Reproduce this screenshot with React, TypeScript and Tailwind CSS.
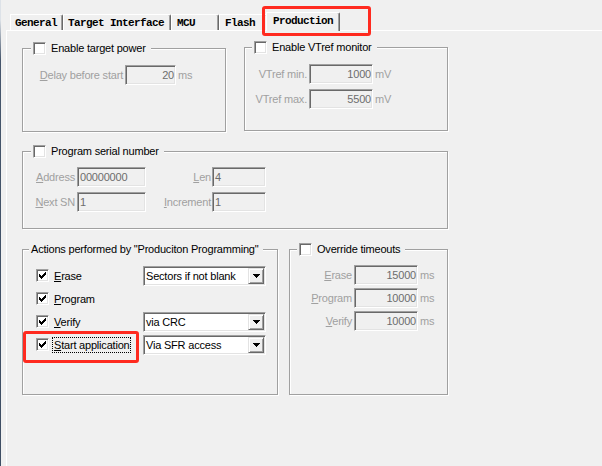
import React from "react";

const FONT = "font-['Liberation_Sans',Arial,sans-serif]";
const sunken =
  "border border-t-[#a0a0a0] border-l-[#a0a0a0] border-b-white border-r-white shadow-[inset_1px_1px_0_#696969,inset_-1px_-1px_0_#e3e3e3]";
const DIS = "text-[#a0a0a0]";

function CheckMark() {
  const px: [number, number, number][] = [
    [6, 0, 1],
    [5, 1, 2],
    [0, 2, 1],
    [4, 2, 3],
    [0, 3, 2],
    [3, 3, 3],
    [0, 4, 5],
    [1, 5, 3],
    [2, 6, 1],
  ];
  return (
    <svg width="7" height="7" viewBox="0 0 7 7" shapeRendering="crispEdges">
      {px.map(([x, y, w], i) => (
        <rect key={i} x={x} y={y} width={w} height={1} fill="#000" />
      ))}
    </svg>
  );
}

function Checkbox({ checked }: { checked?: boolean }) {
  return (
    <span className={`w-[13px] h-[13px] shrink-0 bg-white ${sunken} flex items-center justify-center`}>
      {checked && <CheckMark />}
    </span>
  );
}

function Arrow() {
  return (
    <svg width="7" height="4" viewBox="0 0 7 4" shapeRendering="crispEdges">
      <rect x="0" y="0" width="7" height="1" fill="#000" />
      <rect x="1" y="1" width="5" height="1" fill="#000" />
      <rect x="2" y="2" width="3" height="1" fill="#000" />
      <rect x="3" y="3" width="1" height="1" fill="#000" />
    </svg>
  );
}

function Dropdown({ text }: { text: string }) {
  return (
    <div className={`w-[123px] h-[20px] shrink-0 bg-white ${sunken} flex items-center`}>
      <span className="flex-1 pl-[2px] whitespace-nowrap overflow-hidden">{text}</span>
      <span className="mr-[1px] w-[16px] h-[16px] bg-[#f0f0f0] border border-t-[#e3e3e3] border-l-[#e3e3e3] border-b-[#696969] border-r-[#696969] shadow-[inset_1px_1px_0_#fff,inset_-1px_-1px_0_#a0a0a0] flex items-center justify-center">
        <Arrow />
      </span>
    </div>
  );
}

function Field({ cls, children }: { cls: string; children: React.ReactNode }) {
  return (
    <div className={`h-[20px] shrink-0 bg-[#f0f0f0] ${sunken} flex items-center text-[#6d6d6d] ${cls}`}>
      {children}
    </div>
  );
}

function U({ children }: { children: React.ReactNode }) {
  return <span className="underline underline-offset-[1px] decoration-1">{children}</span>;
}

function Group({
  cls,
  titleMl,
  title,
  children,
}: {
  cls: string;
  titleMl: string;
  title: React.ReactNode;
  children?: React.ReactNode;
}) {
  return (
    <div className={`shrink-0 border border-[#a0a0a0] shadow-[inset_1px_1px_0_#fff,1px_1px_0_#fff] flex flex-col ${cls}`}>
      <div className={`-mt-[8px] h-[14px] w-fit flex items-center bg-[#f0f0f0] pl-[2px] pr-[5px] whitespace-nowrap ${titleMl}`}>
        {title}
      </div>
      {children}
    </div>
  );
}

function Tab({
  w,
  pl,
  selected,
  children,
}: {
  w: string;
  pl: string;
  selected?: boolean;
  children: React.ReactNode;
}) {
  return (
    <div
      className={`${w} ${pl} ${
        selected ? "relative z-10 -mb-[1px] -ml-[2px] h-[19px]" : "h-[16px]"
      } shrink-0 bg-[#f0f0f0] border-l border-t border-white border-r border-r-[#696969] shadow-[inset_-1px_0_0_#a0a0a0] rounded-tr-[2px] pt-[2px] leading-[12px] whitespace-nowrap`}
    >
      {children}
    </div>
  );
}

function ActionRow({
  label,
  dropdown,
  focus,
}: {
  label: React.ReactNode;
  dropdown?: string;
  focus?: boolean;
}) {
  return (
    <div className="h-[23px] flex items-center">
      <div className="w-[120px] shrink-0 flex items-center pl-[13px]">
        <Checkbox checked />
        <span
          className={`ml-[3px] px-[1px] border leading-[14px] whitespace-nowrap ${
            focus ? "border-dotted border-black" : "border-transparent"
          }`}
        >
          {label}
        </span>
      </div>
      {dropdown && <Dropdown text={dropdown} />}
    </div>
  );
}

function TimeoutRow({ label, value }: { label: React.ReactNode; value: string }) {
  return (
    <div className="h-[20px] flex items-center">
      <span className={`w-[62px] text-right whitespace-nowrap ${DIS}`}>{label}</span>
      <Field cls="ml-[2px] w-[64px] justify-end pr-[1px]">{value}</Field>
      <span className={`ml-[2px] ${DIS}`}>ms</span>
    </div>
  );
}

export default function App() {
  return (
    <div
      className={`relative w-[602px] h-[466px] overflow-hidden bg-[#f0f0f0] flex ${FONT} text-[11px] leading-[14px] tracking-[-0.2px] text-black`}
    >
      <div className="w-[1px] shrink-0 bg-[linear-gradient(to_bottom,#dde2e8_0px,#dde2e8_20px,#46566c_60px,#3e4e64_100%)]" />
      <div className="flex-1 flex flex-col">
        <div className="h-[30px] shrink-0 flex items-end pl-[9px] font-['Liberation_Mono',monospace] font-bold text-[11px] tracking-[-0.6px]">
          <Tab w="w-[53px]" pl="pl-[4px]">General</Tab>
          <Tab w="w-[108px]" pl="pl-[4px]">Target Interface</Tab>
          <Tab w="w-[48px]" pl="pl-[5px]">MCU</Tab>
          <Tab w="w-[49px]" pl="pl-[5px]">Flash</Tab>
          <Tab w="w-[74px]" pl="pl-[6px]" selected>
            Production
          </Tab>
        </div>

        <div className="ml-[5px] flex-1 border-l border-t border-white flex flex-col">
          {/* Row 1 */}
          <div className="mt-[17px] ml-[15px] flex items-start">
            <Group
              cls="w-[204px] h-[84px]"
              titleMl="ml-[8px]"
              title={
                <>
                  <Checkbox />
                  <span className="ml-[5px]">Enable target power</span>
                </>
              }
            >
              <div className="mt-[10px] flex items-center h-[20px]">
                <span className={`w-[100px] text-right whitespace-nowrap ${DIS}`}>
                  <U>D</U>elay before start
                </span>
                <Field cls="ml-[2px] w-[51px] justify-end pr-[1px]">20</Field>
                <span className={`ml-[2px] ${DIS}`}>ms</span>
              </div>
            </Group>

            <Group
              cls="ml-[18px] -mt-[1px] w-[204px] h-[84px]"
              titleMl="ml-[7px]"
              title={
                <>
                  <Checkbox />
                  <span className="ml-[5px]">Enable VTref monitor</span>
                </>
              }
            >
              <div className="mt-[10px] flex flex-col gap-[5px]">
                <div className="flex items-center h-[20px]">
                  <span className={`w-[62px] text-right whitespace-nowrap ${DIS}`}>VTref min.</span>
                  <Field cls="ml-[2px] w-[64px] justify-end pr-[1px]">1000</Field>
                  <span className={`ml-[2px] ${DIS}`}>mV</span>
                </div>
                <div className="flex items-center h-[20px]">
                  <span className={`w-[62px] text-right whitespace-nowrap ${DIS}`}>VTref max.</span>
                  <Field cls="ml-[2px] w-[64px] justify-end pr-[1px]">5500</Field>
                  <span className={`ml-[2px] ${DIS}`}>mV</span>
                </div>
              </div>
            </Group>
          </div>

          {/* Row 2 */}
          <div className="mt-[19px] ml-[15px] flex">
            <Group
              cls="w-[426px] h-[78px]"
              titleMl="ml-[8px]"
              title={
                <>
                  <Checkbox />
                  <span className="ml-[5px]">Program serial number</span>
                </>
              }
            >
              <div className="mt-[9px] flex flex-col gap-[5px]">
                <div className="flex items-center h-[20px]">
                  <span className={`w-[52px] text-right whitespace-nowrap ${DIS}`}>
                    <U>A</U>ddress
                  </span>
                  <Field cls="ml-[2px] w-[69px] pl-[2px]">00000000</Field>
                  <span className={`w-[65px] text-right whitespace-nowrap ${DIS}`}>
                    <U>L</U>en
                  </span>
                  <Field cls="ml-[1px] w-[54px] pl-[2px]">4</Field>
                </div>
                <div className="flex items-center h-[20px]">
                  <span className={`w-[52px] text-right whitespace-nowrap ${DIS}`}>
                    <U>N</U>ext SN
                  </span>
                  <Field cls="ml-[2px] w-[69px] pl-[2px]">1</Field>
                  <span className={`w-[65px] text-right whitespace-nowrap ${DIS}`}>
                    <U>I</U>ncrement
                  </span>
                  <Field cls="ml-[1px] w-[54px] pl-[2px]">1</Field>
                </div>
              </div>
            </Group>
          </div>

          {/* Row 3 */}
          <div className="mt-[20px] ml-[15px] flex items-start">
            <Group
              cls="w-[256px] h-[146px]"
              titleMl="ml-[6px]"
              title={<span>Actions performed by "Produciton Programming"</span>}
            >
              <div className="mt-[8px] flex flex-col">
                <ActionRow
                  label={
                    <>
                      <U>E</U>rase
                    </>
                  }
                  dropdown="Sectors if not blank"
                />
                <ActionRow
                  label={
                    <>
                      <U>P</U>rogram
                    </>
                  }
                />
                <ActionRow
                  label={
                    <>
                      <U>V</U>erify
                    </>
                  }
                  dropdown="via CRC"
                />
                <ActionRow
                  label={
                    <>
                      <U>S</U>tart application
                    </>
                  }
                  dropdown="Via SFR access"
                  focus
                />
              </div>
            </Group>

            <Group
              cls="ml-[11px] w-[159px] h-[146px]"
              titleMl="ml-[7px]"
              title={
                <>
                  <Checkbox />
                  <span className="ml-[5px]">Override timeouts</span>
                </>
              }
            >
              <div className="mt-[9px] flex flex-col gap-[3px]">
                <TimeoutRow
                  label={
                    <>
                      <U>E</U>rase
                    </>
                  }
                  value="15000"
                />
                <TimeoutRow
                  label={
                    <>
                      <U>P</U>rogram
                    </>
                  }
                  value="10000"
                />
                <TimeoutRow
                  label={
                    <>
                      <U>V</U>erify
                    </>
                  }
                  value="10000"
                />
              </div>
            </Group>
          </div>
        </div>
      </div>

      {/* annotation boxes */}
      <div className="absolute left-[262px] top-[6px] w-[109px] h-[30px] border-[3px] border-[#ff2a1f] rounded-[3px]" />
      <div className="absolute left-[23px] top-[331px] w-[116px] h-[32px] border-[3px] border-[#ff2a1f] rounded-[3px]" />
    </div>
  );
}
